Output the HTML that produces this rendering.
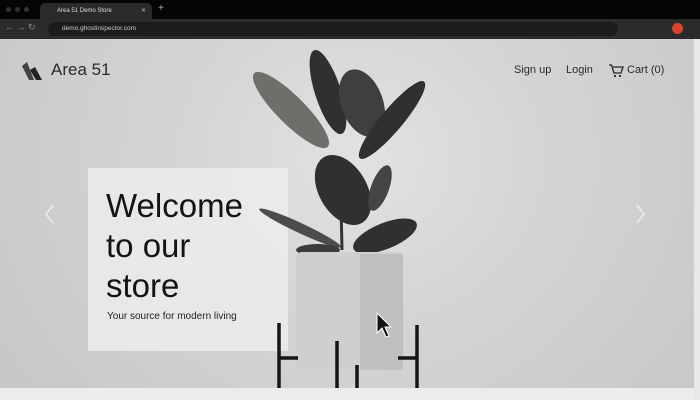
<!DOCTYPE html>
<html><head><style>
*{margin:0;padding:0;box-sizing:border-box}
body{width:700px;height:400px;overflow:hidden;font-family:"Liberation Sans",sans-serif;background:#000;position:relative}
.tabbar{position:absolute;left:0;top:0;width:700px;height:19px;background:#050505}
.tab{position:absolute;left:40px;top:3px;width:112px;height:16px;background:#2a2a2a;border-radius:5px 5px 0 0;color:#ddd;font-size:6px;line-height:16px;padding-left:17px}
.addr{position:absolute;left:0;top:19px;width:700px;height:20px;background:#2b2b2b}
.url{position:absolute;left:48px;width:570px;height:14px;background:#1c1c1c;border-radius:7px;color:#ccc;font-size:6.5px;line-height:14px;padding-left:14px}
.page{position:absolute;left:0;top:39px;width:694px;height:349px;background:radial-gradient(ellipse 420px 380px at 360px 120px,#e2e2e2 0%,#d4d4d4 45%,#c8c8c8 100%)}
.sb{position:absolute;left:694px;top:39px;width:6px;height:361px;background:#e8e8e8}
.bottom{position:absolute;left:0;top:388px;width:694px;height:12px;background:#ececec}
.box{position:absolute;left:88px;top:129px;width:200px;height:183px;background:rgba(236,236,236,.85)}
h1{position:absolute;left:106px;top:186px;font-weight:400;font-size:33px;line-height:40px;color:#141414}
.sub{position:absolute;left:107px;top:311px;font-size:10px;color:#222}
.nav{position:absolute;top:64px;font-size:11px;color:#2a2a2a}
</style></head><body>
<div class="tabbar"><div style="position:absolute;left:6px;top:7px;width:5px;height:5px;border-radius:50%;background:#333;box-shadow:9px 0 #333,18px 0 #333"></div>
<div class="tab">Area 51 Demo Store<span style="position:absolute;right:6px;color:#bbb">✕</span></div>
<div style="position:absolute;left:158px;top:3px;color:#aaa;font-size:10px">+</div></div>
<div class="addr">
<span style="position:absolute;left:5px;top:3px;color:#888;font-size:9px">← → ↻</span>
<div class="url" style="top:3px">demo.ghostinspector.com</div>
<div style="position:absolute;left:672px;top:4px;width:11px;height:11px;border-radius:50%;background:#d9452a"></div></div>
<div class="page">
<div class="box"></div>
<svg width="694" height="349" style="position:absolute;left:0;top:0">
<g transform="translate(0,-39)">
<path d="M22 66 L27 62 L34 80 L29 80 Z" fill="#444"/><path d="M30 70 L35 67 L42 80 L36 80 Z" fill="#222"/>
<g fill="#2e312e">
<ellipse cx="291" cy="110" rx="52" ry="14" transform="rotate(45 291 110)" fill="#6c6f6a"/>
<ellipse cx="328" cy="92" rx="44" ry="13" transform="rotate(72 328 92)"/>
<ellipse cx="362" cy="103" rx="35" ry="21" transform="rotate(70 362 103)" fill="#3d403d"/>
<ellipse cx="392" cy="120" rx="50" ry="11" transform="rotate(-50 392 120)"/>
<path d="M340 160 L342 250" stroke="#333" stroke-width="3"/>
<ellipse cx="343" cy="190" rx="38" ry="24" transform="rotate(60 343 190)"/>
<ellipse cx="380" cy="188" rx="24" ry="9" transform="rotate(-70 380 188)" fill="#444"/>
<ellipse cx="300" cy="228" rx="45" ry="5" transform="rotate(25 300 228)" fill="#4a4d4a"/>
<ellipse cx="385" cy="236" rx="34" ry="13" transform="rotate(-22 385 236)"/>
<ellipse cx="318" cy="250" rx="22" ry="6" fill="#3a3d3a"/>
</g>
<rect x="296" y="252" width="107" height="118" rx="6" fill="#cfcfcf"/>
<rect x="360" y="254" width="43" height="116" fill="#b4b4b4" opacity=".6"/>
<g stroke="#151515" stroke-width="3.5" fill="none">
<path d="M279 323V388M337 341V388M357 365V388M417 325V388M279 358H298M398 358H417"/></g>
<path d="M53 205 L46 214 L53 223M637 205 L644 214 L637 223" stroke="#eee" stroke-width="1.5" fill="none"/>
<path d="M377 313 L377 333 L382 328 L386 337 L389 336 L385 327 L391 327 Z" fill="#111" stroke="#fff" stroke-width="1"/>
<path d="M609 65h2.5l2.5 8h7l2-6h-10" stroke="#222" stroke-width="1.3" fill="none"/><circle cx="615" cy="76" r="1.1" fill="#222"/><circle cx="620" cy="76" r="1.1" fill="#222"/>
</g></svg>
<div style="position:absolute;left:51px;top:21px;font-size:17px;color:#2a2a2a">Area 51</div>
</div>
<div class="nav" style="left:514px">Sign up</div>
<div class="nav" style="left:566px">Login</div>
<div class="nav" style="left:627px">Cart (0)</div>
<h1>Welcome<br>to our<br>store</h1>
<div class="sub">Your source for modern living</div>
<div class="sb"></div><div class="bottom"></div>
</body></html>
